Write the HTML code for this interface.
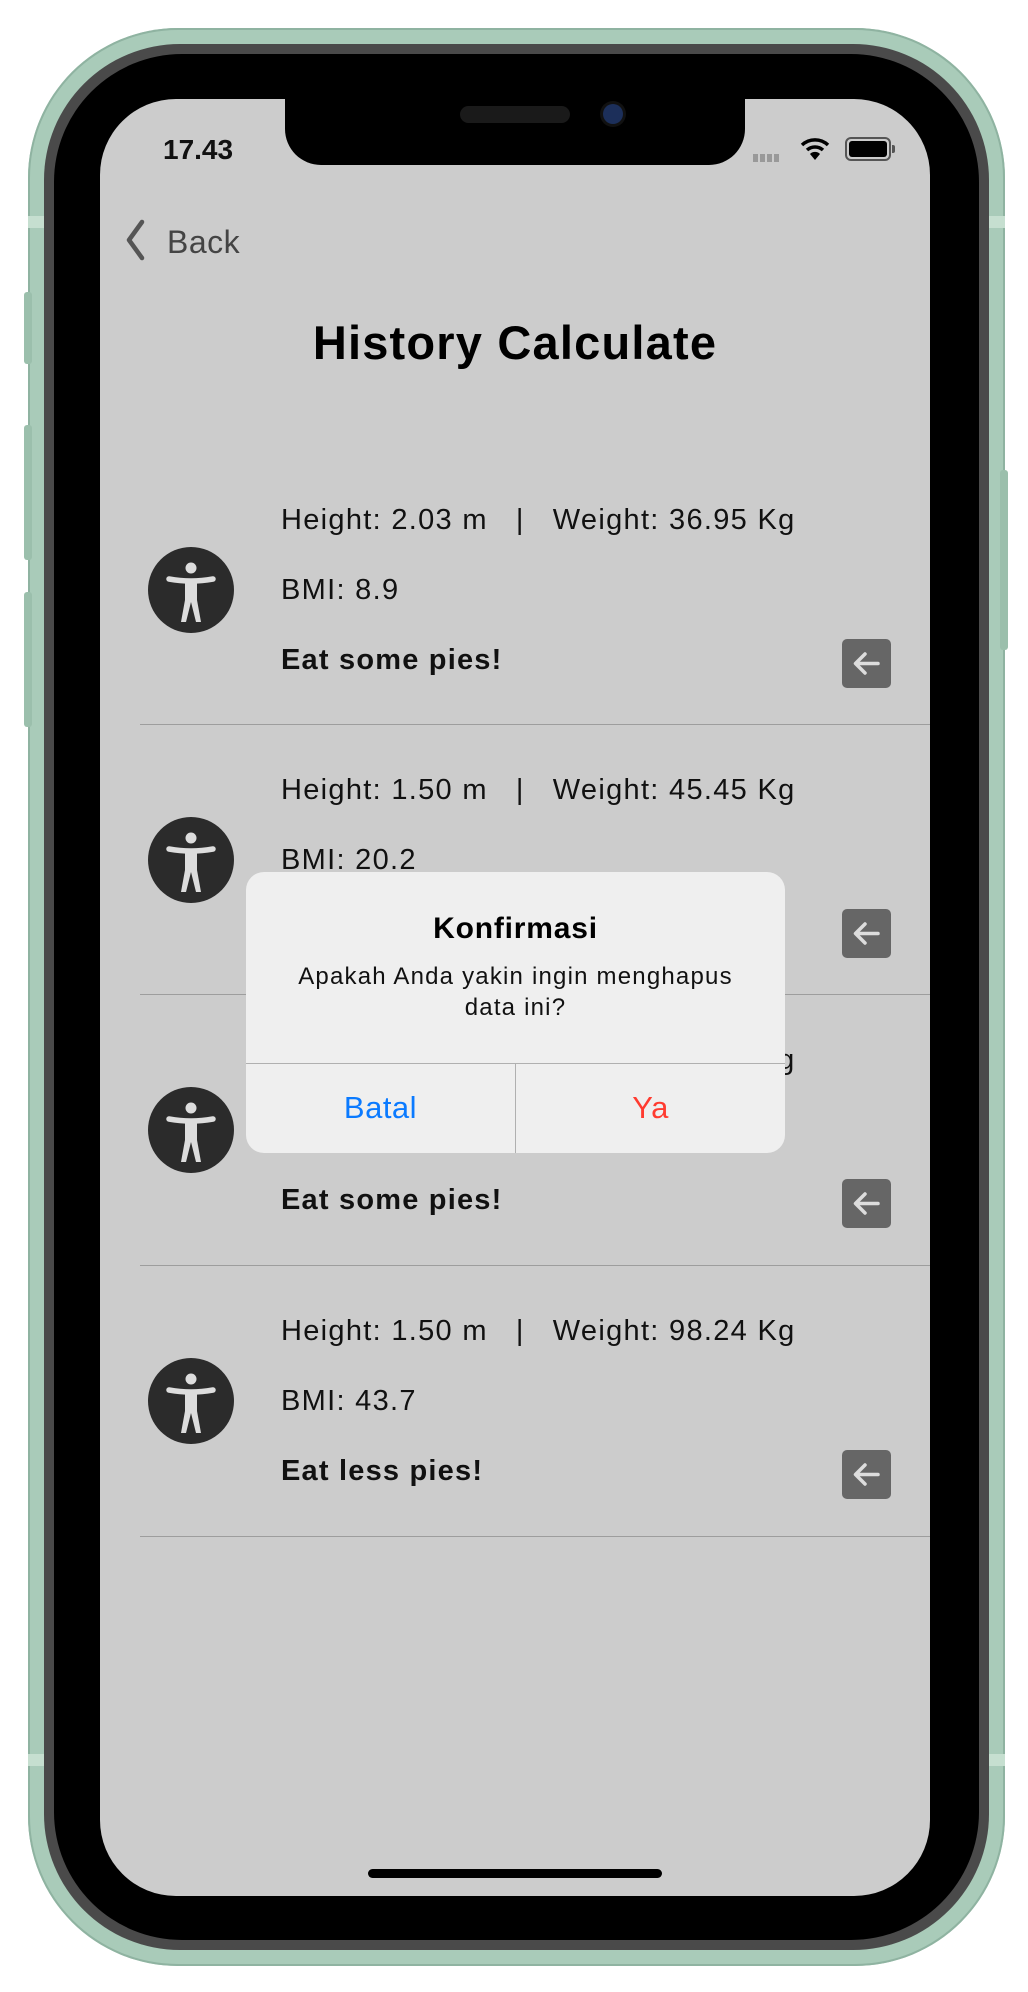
<!DOCTYPE html>
<html><head><meta charset="utf-8"><style>
*{margin:0;padding:0;box-sizing:border-box}
body{width:1028px;height:1992px;background:#fff;position:relative;overflow:hidden;font-family:"Liberation Sans",sans-serif}
.abs{position:absolute}
.phone{left:28px;top:28px;width:977px;height:1938px;border-radius:150px;background:#a9cbb9;box-shadow:inset 0 0 0 2px #8fb3a1}
.ring{left:44px;top:44px;width:945px;height:1906px;border-radius:136px;background:#4a4a4a}
.blk{left:54px;top:54px;width:925px;height:1886px;border-radius:128px;background:#000}
.screen{left:100px;top:99px;width:830px;height:1797px;border-radius:76px;background:#cccccc;overflow:hidden}
.notch{left:185px;top:-5px;width:460px;height:71px;background:#000;border-radius:0 0 36px 36px}
.t{position:absolute;font-size:29px;line-height:34px;color:#111;white-space:nowrap;letter-spacing:1.3px}
.b{font-weight:bold;letter-spacing:1.2px}
.ic{position:absolute;width:86px;height:86px;border-radius:50%;background:#2b2b2b}
.btn{position:absolute;width:49px;height:49px;border-radius:5px;background:#666}
.sep{position:absolute;left:40px;right:0;height:1px;background:#9d9d9d}
</style></head><body>
<div class="abs phone"></div>
<div class="abs" style="left:28px;top:216px;width:977px;height:12px;background:#c6dfd0"></div>
<div class="abs" style="left:28px;top:1754px;width:977px;height:12px;background:#c6dfd0"></div>
<div class="abs" style="left:24px;top:292px;width:8px;height:72px;background:#9bbfac;border-radius:3px"></div>
<div class="abs" style="left:24px;top:425px;width:8px;height:135px;background:#9bbfac;border-radius:3px"></div>
<div class="abs" style="left:24px;top:592px;width:8px;height:135px;background:#9bbfac;border-radius:3px"></div>
<div class="abs" style="left:1000px;top:470px;width:8px;height:180px;background:#9bbfac;border-radius:3px"></div>
<div class="abs ring"></div>
<div class="abs blk"></div>
<div class="abs screen">
 <div class="abs notch"></div>
 <div class="abs" style="left:360px;top:7px;width:110px;height:17px;border-radius:9px;background:#1a1a1a"></div>
 <div class="abs" style="left:503px;top:5px;width:20px;height:20px;border-radius:50%;background:#1c2f5a;box-shadow:0 0 0 3px #111"></div>
 <div class="t b" style="left:63px;top:34px;font-size:28px;letter-spacing:0">17.43</div>
 <div class="abs" style="left:653px;top:55px;width:26px;height:8px;background:repeating-linear-gradient(90deg,#999 0 5px,transparent 5px 7px)"></div>
 <svg class="abs" style="left:700px;top:37px" width="30" height="26" viewBox="0 0 30 26"><path d="M2 9a19 19 0 0 1 26 0" stroke="#000" stroke-width="3.5" fill="none"/><path d="M7 14a12 12 0 0 1 16 0" stroke="#000" stroke-width="3.5" fill="none"/><path d="M10 18l5 6 5-6a7 7 0 0 0-10 0z" fill="#000"/></svg>
 <div class="abs" style="left:745px;top:38px;width:46px;height:24px;border:2.5px solid #555;border-radius:6px;padding:2px"><div style="width:100%;height:100%;background:#000;border-radius:3px"></div></div>
 <div class="abs" style="left:792px;top:46px;width:3px;height:8px;background:#555;border-radius:0 2px 2px 0"></div>

 <svg class="abs" style="left:24px;top:120px" width="22" height="42" viewBox="0 0 22 42"><path d="M18 3L5 21l13 18" stroke="#555" stroke-width="4.5" fill="none" stroke-linecap="round" stroke-linejoin="round"/></svg>
 <div class="t" style="left:67px;top:123px;font-size:32px;line-height:40px;color:#444;letter-spacing:0.5px">Back</div>
 <div class="t b" style="left:0;width:830px;text-align:center;top:216px;font-size:47px;line-height:56px;color:#000;letter-spacing:1.2px">History Calculate</div>

 <!-- row1 -->
 <div class="t" style="left:181px;top:404px">Height: 2.03 m &nbsp; | &nbsp; Weight: 36.95 Kg</div>
 <div class="t" style="left:181px;top:474px">BMI: 8.9</div>
 <div class="t b" style="left:181px;top:544px">Eat some pies!</div>
 <div class="ic" style="left:48px;top:448px"><svg width="86" height="86" viewBox="0 0 86 86"><circle cx="43" cy="21" r="5.5" fill="#ddd"/><path d="M21 32q22 4 44 0" stroke="#ddd" stroke-width="5.5" stroke-linecap="round" fill="none"/><path d="M37 33h12v20l4 22h-5l-5-20-5 20h-5l4-22z" fill="#ddd"/></svg></div>
 <div class="btn" style="left:742px;top:540px"><svg width="49" height="49" viewBox="0 0 49 49"><path d="M36 24.5H14M23 15l-9.5 9.5L23 34" stroke="#ddd" stroke-width="3.5" fill="none" stroke-linecap="round" stroke-linejoin="round"/></svg></div>
 <div class="sep" style="top:625px"></div>
 <!-- row2 -->
 <div class="t" style="left:181px;top:674px">Height: 1.50 m &nbsp; | &nbsp; Weight: 45.45 Kg</div>
 <div class="t" style="left:181px;top:744px">BMI: 20.2</div>
 <div class="t b" style="left:181px;top:814px">Eat some pies!</div>
 <div class="ic" style="left:48px;top:718px"><svg width="86" height="86" viewBox="0 0 86 86"><circle cx="43" cy="21" r="5.5" fill="#ddd"/><path d="M21 32q22 4 44 0" stroke="#ddd" stroke-width="5.5" stroke-linecap="round" fill="none"/><path d="M37 33h12v20l4 22h-5l-5-20-5 20h-5l4-22z" fill="#ddd"/></svg></div>
 <div class="btn" style="left:742px;top:810px"><svg width="49" height="49" viewBox="0 0 49 49"><path d="M36 24.5H14M23 15l-9.5 9.5L23 34" stroke="#ddd" stroke-width="3.5" fill="none" stroke-linecap="round" stroke-linejoin="round"/></svg></div>
 <div class="sep" style="top:895px"></div>
 <!-- row3 -->
 <div class="t" style="left:181px;top:944px">Height: 1.50 m &nbsp; | &nbsp; Weight: 45.45 Kg</div>
 <div class="t" style="left:181px;top:1014px">BMI: 20.2</div>
 <div class="t b" style="left:181px;top:1084px">Eat some pies!</div>
 <div class="ic" style="left:48px;top:988px"><svg width="86" height="86" viewBox="0 0 86 86"><circle cx="43" cy="21" r="5.5" fill="#ddd"/><path d="M21 32q22 4 44 0" stroke="#ddd" stroke-width="5.5" stroke-linecap="round" fill="none"/><path d="M37 33h12v20l4 22h-5l-5-20-5 20h-5l4-22z" fill="#ddd"/></svg></div>
 <div class="btn" style="left:742px;top:1080px"><svg width="49" height="49" viewBox="0 0 49 49"><path d="M36 24.5H14M23 15l-9.5 9.5L23 34" stroke="#ddd" stroke-width="3.5" fill="none" stroke-linecap="round" stroke-linejoin="round"/></svg></div>
 <div class="sep" style="top:1166px"></div>
 <!-- row4 -->
 <div class="t" style="left:181px;top:1215px">Height: 1.50 m &nbsp; | &nbsp; Weight: 98.24 Kg</div>
 <div class="t" style="left:181px;top:1285px">BMI: 43.7</div>
 <div class="t b" style="left:181px;top:1355px">Eat less pies!</div>
 <div class="ic" style="left:48px;top:1259px"><svg width="86" height="86" viewBox="0 0 86 86"><circle cx="43" cy="21" r="5.5" fill="#ddd"/><path d="M21 32q22 4 44 0" stroke="#ddd" stroke-width="5.5" stroke-linecap="round" fill="none"/><path d="M37 33h12v20l4 22h-5l-5-20-5 20h-5l4-22z" fill="#ddd"/></svg></div>
 <div class="btn" style="left:742px;top:1351px"><svg width="49" height="49" viewBox="0 0 49 49"><path d="M36 24.5H14M23 15l-9.5 9.5L23 34" stroke="#ddd" stroke-width="3.5" fill="none" stroke-linecap="round" stroke-linejoin="round"/></svg></div>
 <div class="sep" style="top:1437px"></div>

 <!-- dialog -->
 <div class="abs" style="left:146px;top:773px;width:539px;height:281px;border-radius:18px;background:#efefef;overflow:hidden">
  <div class="t b" style="left:0;width:539px;text-align:center;top:39px;font-size:30px;line-height:36px;color:#000;letter-spacing:0.8px">Konfirmasi</div>
  <div class="t" style="left:0;width:539px;text-align:center;top:89px;font-size:24px;line-height:31px;color:#111;letter-spacing:1.2px">Apakah Anda yakin ingin menghapus<br>data ini?</div>
  <div class="abs" style="left:0;right:0;top:191px;height:1px;background:#b0b0b0"></div>
  <div class="abs" style="left:269px;top:192px;width:1px;height:90px;background:#b0b0b0"></div>
  <div class="t" style="left:0;width:269px;text-align:center;top:218px;font-size:31px;line-height:36px;color:#0a7aff;letter-spacing:0.5px">Batal</div>
  <div class="t" style="left:270px;width:269px;text-align:center;top:218px;font-size:31px;line-height:36px;color:#ff3b30;letter-spacing:0.5px">Ya</div>
 </div>
 <div class="abs" style="left:268px;top:1770px;width:294px;height:9px;border-radius:5px;background:#000"></div>
</div>
</body></html>
